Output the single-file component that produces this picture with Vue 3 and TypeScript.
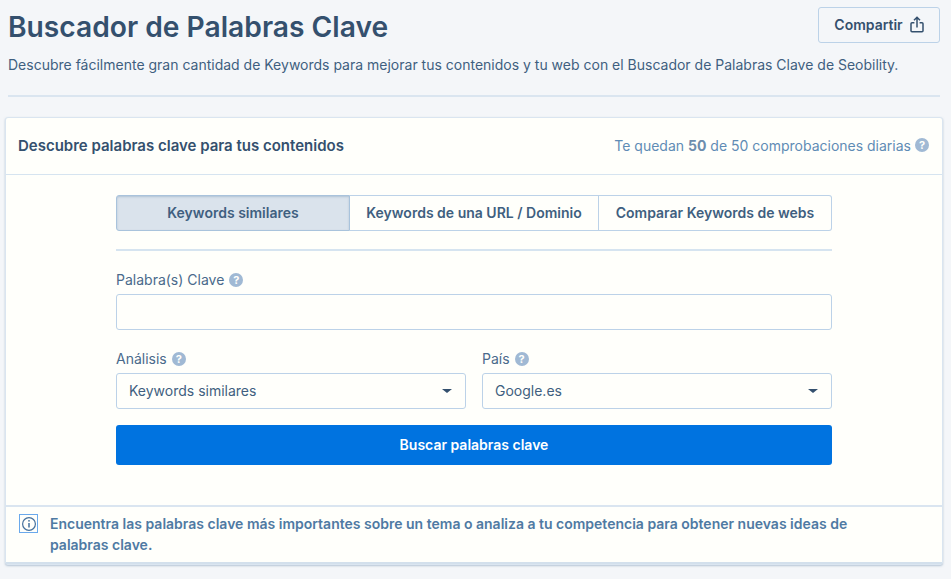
<script setup lang="ts">
import { ref } from 'vue'

const tabs = ['Keywords similares', 'Keywords de una URL / Dominio', 'Comparar Keywords de webs']
const activeTab = ref(0)
const keyword = ref('')
</script>

<template>
  <div class="page">
    <header class="head">
      <div class="head-top">
        <h1>Buscador de Palabras Clave</h1>
        <button class="share">
          Compartir
          <svg width="14" height="17" viewBox="0 0 14 17" fill="none" stroke="#34506e" stroke-width="1.5">
            <path d="M4.4 6.7H2a1 1 0 0 0-1 1v7.1a1 1 0 0 0 1 1h10a1 1 0 0 0 1-1V7.7a1 1 0 0 0-1-1H9.6" />
            <path d="M7 11.6V1.4M4 4.2 7 1.2l3 3" />
          </svg>
        </button>
      </div>
      <p class="lead">Descubre fácilmente gran cantidad de Keywords para mejorar tus contenidos y tu web con el Buscador de Palabras Clave de Seobility.</p>
    </header>

    <section class="card">
      <div class="card-head">
        <h2>Descubre palabras clave para tus contenidos</h2>
        <div class="quota">
          <span>Te quedan <b>50</b> de 50 comprobaciones diarias</span>
          <span class="help">?</span>
        </div>
      </div>

      <div class="card-body">
        <div class="tabs">
          <button
            v-for="(tab, i) in tabs"
            :key="tab"
            class="tab"
            :class="{ active: i === activeTab }"
            @click="activeTab = i"
          >{{ tab }}</button>
        </div>

        <div class="field first">
          <label>Palabra(s) Clave <span class="help">?</span></label>
          <input v-model="keyword" type="text">
        </div>

        <div class="row">
          <div class="field">
            <label>Análisis <span class="help">?</span></label>
            <div class="select">Keywords similares<i class="caret" /></div>
          </div>
          <div class="field">
            <label>País <span class="help">?</span></label>
            <div class="select">Google.es<i class="caret" /></div>
          </div>
        </div>

        <button class="submit">Buscar palabras clave</button>
      </div>

      <div class="note">
        <span class="note-icon">
          <svg width="16" height="16" viewBox="0 0 16 16" fill="none" stroke="#45709c" stroke-width="1.2">
            <circle cx="8" cy="8" r="6.4" />
            <path d="M8 7v4.4" stroke-width="1.5" />
            <circle cx="8" cy="4.8" r=".9" fill="#45709c" stroke="none" />
          </svg>
        </span>
        <p>Encuentra las palabras clave más importantes sobre un tema o analiza a tu competencia para obtener nuevas ideas de palabras clave.</p>
      </div>
    </section>
  </div>
</template>

<style>
html, body {
  background: #f4f6f9;
}
</style>

<style scoped>
.page {
  height: 579px;
  box-sizing: border-box;
  overflow: hidden;
  padding: 7px 11px 0 5px;
  font-family: Inter, "Liberation Sans", sans-serif;
  color: #34506e;
}

.head {
  margin: 0 0 20px 3px;
  padding-bottom: 19px;
  border-bottom: 2px solid #dae5f0;
}

.head-top {
  display: flex;
  justify-content: space-between;
  align-items: flex-start;
}

h1 {
  margin: 0;
  font-size: 28.2px;
  line-height: 40px;
  font-weight: 600;
  color: #34506e;
}

.share {
  display: flex;
  align-items: center;
  gap: 7px;
  width: 122px;
  height: 36px;
  justify-content: center;
  padding: 0 0 1px;
  background: #f4f6f9;
  border: 1px solid #bcd2e8;
  border-radius: 3px;
  font: 600 14px Inter, "Liberation Sans", sans-serif;
  color: #34506e;
}

.lead {
  margin: 7px 0 0;
  font-size: 14px;
  line-height: 22px;
  color: #3f5f80;
}

.card {
  width: 936px;
  background: #fffffb;
  border: 1px solid #dae5f0;
  border-radius: 3px;
  box-shadow: 0 1px 2px rgba(120, 150, 180, 0.5);
}

.card-head {
  display: flex;
  justify-content: space-between;
  align-items: center;
  box-sizing: border-box;
  height: 57px;
  padding: 0 12px 2px;
  border-bottom: 1px solid #d6e4f0;
}

h2 {
  margin: 0;
  font-size: 15px;
  font-weight: 600;
  color: #34506e;
}

.quota {
  display: flex;
  align-items: center;
  gap: 4px;
  margin-right: 1px;
  font-size: 14px;
  color: #5f8cb5;
}

.quota b {
  font-weight: 700;
  color: #6c8dad;
}

.help {
  display: inline-flex;
  justify-content: center;
  align-items: center;
  width: 14px;
  height: 14px;
  border-radius: 50%;
  background: #a0b9d4;
  color: #fffffb;
  font-size: 11px;
  font-weight: 700;
  line-height: 1;
}

.card-body {
  width: 716px;
  margin: 0 auto;
  padding: 20px 0 40px;
}

.tabs {
  display: flex;
  height: 36px;
  border-radius: 3px;
}

.tab {
  height: 36px;
  padding: 0 0 2px;
  background: #fffffb;
  border: 1px solid #bcd2e8;
  border-left-width: 0;
  font: 600 14px Inter, "Liberation Sans", sans-serif;
  color: #3f5f80;
}

.tab:first-child {
  width: 234px;
  border-left-width: 1px;
  border-radius: 3px 0 0 3px;
}

.tab:nth-child(2) {
  width: 249px;
}

.tab:last-child {
  width: 233px;
  border-radius: 0 3px 3px 0;
}

.tab.active {
  background: #dae3ec;
  border-color: #a9c3dc;
  box-shadow: inset 0 1px 2px rgba(80, 120, 160, 0.3);
}

.field {
  display: flex;
  flex-direction: column;
  flex: 1;
}

.field.first {
  margin-top: 18px;
  padding-top: 19px;
  border-top: 2px solid #d6e4f0;
}

label {
  display: flex;
  align-items: center;
  gap: 5px;
  height: 20px;
  margin-bottom: 4px;
  font-size: 14px;
  line-height: 20px;
  color: #4a6a8b;
}

input, .select {
  box-sizing: border-box;
  height: 36px;
  width: 100%;
  background: #fffffb;
  border: 1px solid #bcd2e8;
  border-radius: 3px;
}

.select {
  display: flex;
  justify-content: space-between;
  align-items: center;
  padding: 0 12px 2px;
  font-size: 14px;
  color: #3f5f80;
}

.caret {
  width: 0;
  height: 0;
  margin: 2px 1px 0 0;
  border-left: 5px solid transparent;
  border-right: 5px solid transparent;
  border-top: 4px solid #34506e;
}

.row {
  display: flex;
  gap: 16px;
  margin-top: 19px;
}

.submit {
  display: block;
  width: 100%;
  height: 40px;
  margin-top: 16px;
  padding: 0 0 2px;
  background: #0073e0;
  border: none;
  border-radius: 3px;
  color: #fff;
  font: 600 14px Inter, "Liberation Sans", sans-serif;
}

.note {
  display: flex;
  gap: 12px;
  padding: 6px 12px 7px;
  border-top: 2px solid #dae5f0;
  border-bottom: 2px solid #d3e0ec;
}

.note-icon {
  flex: none;
  display: flex;
  justify-content: center;
  align-items: center;
  width: 17px;
  height: 17px;
  margin: 1px 0 0 1px;
  border: 1px solid #6aa9ec;
}

.note p {
  margin: 0;
  max-width: 820px;
  font-size: 14px;
  line-height: 21px;
  font-weight: 600;
  color: #4f7aa3;
}
</style>
